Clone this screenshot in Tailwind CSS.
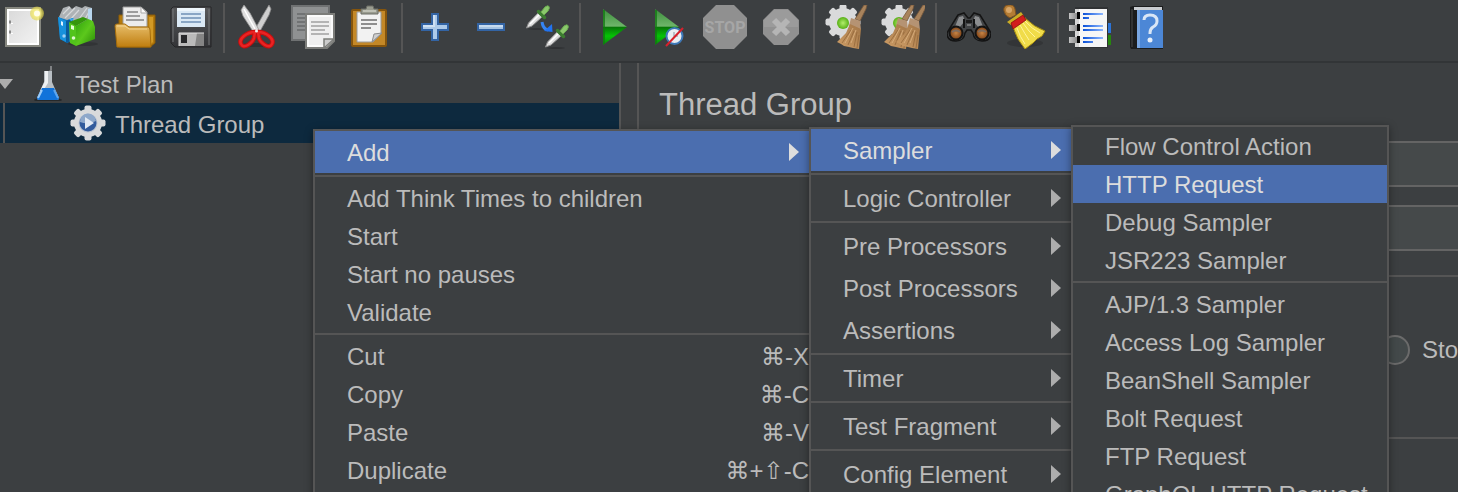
<!DOCTYPE html>
<html lang="en">
<head>
<meta charset="utf-8">
<title>Test Plan</title>
<script src="https://cdn.jsdelivr.net/npm/@tailwindcss/browser@4"></script>
</head>
<body class="relative flex h-screen flex-col overflow-hidden bg-[#3c3f41] font-['Liberation_Sans','DejaVu_Sans',sans-serif] text-2xl text-[#bbbbbb]">

<svg class="absolute h-0 w-0" aria-hidden="true">
  <defs>
    <linearGradient id="paper" x1="0" y1="0" x2="1" y2="1"><stop offset="0" stop-color="#d8d8d8"/><stop offset="1" stop-color="#f4f4f4"/></linearGradient>
    <linearGradient id="gold" x1="0" y1="0" x2="0" y2="1"><stop offset="0" stop-color="#e8bf6c"/><stop offset="1" stop-color="#bf7d0e"/></linearGradient>
    <linearGradient id="green" x1="0" y1="0" x2="1" y2="1"><stop offset="0" stop-color="#2fa30c"/><stop offset=".5" stop-color="#5cc81c"/><stop offset="1" stop-color="#2a8c06"/></linearGradient>
    <linearGradient id="play" x1="0" y1="0" x2="0" y2="1"><stop offset="0" stop-color="#3c8f3c"/><stop offset=".48" stop-color="#6fb56a"/><stop offset=".5" stop-color="#077407"/><stop offset=".75" stop-color="#06c306"/><stop offset="1" stop-color="#0a8a0a"/></linearGradient>
    <linearGradient id="case" x1="0" y1="0" x2="0" y2="1"><stop offset="0" stop-color="#58595b"/><stop offset="1" stop-color="#333437"/></linearGradient>
    <linearGradient id="straw" x1="1" y1="0" x2="0" y2="1"><stop offset="0" stop-color="#a27546"/><stop offset="1" stop-color="#cf9f68"/></linearGradient>
    <linearGradient id="ink" x1="0" y1="0" x2="1" y2="0"><stop offset="0" stop-color="#0a50d8"/><stop offset="1" stop-color="#8fb8ff"/></linearGradient>
    <linearGradient id="metal" x1="0" y1="0" x2="1" y2="0"><stop offset="0" stop-color="#c4c4c4"/><stop offset="1" stop-color="#8e8e8e"/></linearGradient>
    <radialGradient id="star"><stop offset="0" stop-color="#fffef0"/><stop offset=".4" stop-color="#f7f08c"/><stop offset="1" stop-color="#e3d640" stop-opacity=".55"/></radialGradient>
    <radialGradient id="lime"><stop offset="0" stop-color="#b2ee6c"/><stop offset="1" stop-color="#58b016"/></radialGradient>
    <radialGradient id="amber"><stop offset="0" stop-color="#c88444"/><stop offset="1" stop-color="#7a3f14"/></radialGradient>
    <g id="cog" fill="#d9dadb">
      <circle r="14"/>
      <g id="teeth"><rect x="-3.500" y="-17.500" width="7" height="35" rx="2"/><rect x="-17.500" y="-3.500" width="35" height="7" rx="2"/></g>
      <use href="#teeth" transform="rotate(45)"/>
    </g>
    <g id="broom">
      <path d="M39 0h3l-1 4-6 12-5-2z" fill="#a8835c" stroke="#75573a" stroke-width=".8"/>
      <path d="M26 13l9 3 1 9-12-4z" fill="#b59373"/>
      <path d="M25 19l11 5-2 20-6-1-4-1-5-1-3-2-4-2 9-9z" fill="url(#straw)"/>
      <path d="M26 25l-9 13M29 26l-6 14M32 27l-3 15M34 30l-2 13" stroke="#94683b" fill="none" stroke-width=".8"/>
      <path d="M28 23l-8 15M31 25l-5 13" stroke="#ddb483" fill="none" stroke-width=".8"/>
    </g>
    <g id="dropper">
      <ellipse cx="12" cy="24" rx="9" ry=".8" fill="#2c2e30"/>
      <path d="M1.500 23l2-5L13 8l4 4L7 21z" fill="#dedede" stroke="#8e8e8e"/>
      <path d="M5 19L14 10" stroke="#fff" stroke-width="1.500"/>
      <path d="M13.500 6.500l6 6" stroke="#3c7d30" stroke-width="3.500" stroke-linecap="round"/>
      <path d="M16 7l4-5q3-2 4-.500t-1 4.500l-4 4z" fill="#8bc86c" stroke="#6aab50"/>
    </g>
  </defs>
</svg>

<header class="flex shrink-0 gap-2.5 overflow-hidden border-b-2 border-[#323537] pt-[3px] pb-2 pl-px" role="toolbar" aria-label="Main toolbar">
  <div class="flex gap-3 pt-0.5">
    <button class="size-11 shrink-0" aria-label="New"><svg viewBox="0 0 44 44">
      <rect x="5" y="3" width="34" height="38" fill="url(#paper)" stroke="#86877f" stroke-width="2"/><rect x="7" y="5" width="30" height="34" fill="none" stroke="#fff" stroke-width="2"/>
      <path d="M8 15.500h2v3H8zM8 25.500h2v3H8z" fill="#8a8a8a"/><path d="M10 18.500h2M10 28.500h2" stroke="#fff"/>
      <circle cx="36" cy="8.500" r="7" fill="url(#star)"/><circle cx="36" cy="8.500" r="3" fill="#fffde8"/></svg></button>
    <button class="size-11 shrink-0" aria-label="Templates"><svg viewBox="0 0 44 44">
      <ellipse cx="26" cy="39" rx="15" ry="2" fill="#323436"/>
      <path d="M2 12l4-9 6-2 3 3 4-3 6 2 3-2 7 2v14l-15 6L3 16z" fill="#aeb2b5"/><path d="M6 9l7-7M8 13L18 3M12 16L22 5M22 14l8-11M28 14l5-9" stroke="#d6d8da" stroke-width="1.200"/><path d="M31 4l4-1v14l-4 2z" fill="#b8d6ee"/>
      <path d="M1 12l9 3 6-2v22l-6 3-7-4z" fill="#0c78c2"/><path d="M1 12l8 4v21l-6-3z" fill="#1791dc"/><path d="M9 16l7-3v5l-4 3v16l-3 1z" fill="#0b5c9c"/>
      <path d="M12 14l5-1-2 4z" fill="#3aa7ec"/><path d="M4 16l2 1v4l-2-1z" fill="#dff1ff"/><circle cx="7" cy="31" r="1.700" fill="#9fd0f4"/>
      <path d="M12 17l7 3v21l-6-3z" fill="#52c41b"/><path d="M19 21l12-7 5 2 2 6v12l-19 7z" fill="url(#green)"/><path d="M12 17l14-5 5 2-12 7z" fill="#35960c"/>
      <path d="M14 20l3 1v4l-3-1z" fill="#e3ffd3"/><circle cx="16.500" cy="33" r="1.800" fill="#ddf8cd"/></svg></button>
    <button class="size-11 shrink-0" aria-label="Open"><svg viewBox="0 0 44 44">
      <path d="M6 10h8l2 3h17v-3h9v28l-5 4H6z" fill="#b47a0c" stroke="#8a5b06"/><path d="M36 12h4v25l-3 3z" fill="#d39a25"/>
      <path d="M10 2h18l6 5v15H10z" fill="#ececec" stroke="#9b9b9b"/><path d="M28 2v6h6z" fill="#fafafa" stroke="#aaa"/>
      <path d="M14 7h11M13 11h14M13 15h18" stroke="#9d9d9d" stroke-width="1.800"/>
      <path d="M2 21q0-2 2-2h8l4 3h19q2 0 2 3l1 17H4z" fill="url(#gold)" stroke="#a66d0a"/><path d="M4 21h8l4 3h18" fill="none" stroke="#f4d593"/></svg></button>
    <button class="size-11 shrink-0" aria-label="Save"><svg viewBox="0 0 44 44">
      <path d="M4 2h38v40H6l-4-4V4z" fill="url(#case)" stroke="#242526"/><path d="M4 4v33M40 4v36" stroke="#77787a"/>
      <path d="M8 3h28v19H8z" fill="#dbe9f5"/><path d="M8 3h28v3H8z" fill="#edf5fb"/><path d="M12 9h20M12 13h20M12 17h20" stroke="#8aa6c5" stroke-width="1.800"/>
      <path d="M10 28h25v13H10z" fill="#bababa"/><path d="M28 28h7v13h-9z" fill="#858585"/><path d="M12 30h6v8h-6z" fill="#27282a"/><path d="M10 28h25M10 28v13" stroke="#e0e0e0"/></svg></button>
  </div>
  <div class="h-[50px] w-0.5 shrink-0 bg-[#555555]"></div>
  <div class="flex gap-3 pt-0.5">
    <button class="size-11 shrink-0" aria-label="Cut"><svg viewBox="0 0 44 44">
      <ellipse cx="22" cy="40" rx="14" ry="2" fill="#303234"/>
      <path d="M34 0l2 4-2 6-10 18-5-2 9-16z" fill="#cfcfcf" stroke="#8c8c8c" stroke-width=".8"/><path d="M9 0L6 5l2 6 11 17 5-3-9-17z" fill="#dedede" stroke="#929292" stroke-width=".8"/><path d="M9 4l11 20" stroke="#fff" stroke-width="1.500"/>
      <path d="M20 27q-6 0-11 4t-3 8 7 1 6-7zM23 27q6 0 11 4t3 8-7 1-6-7z" fill="none" stroke="#c40f0f" stroke-width="4.500" stroke-linejoin="round"/><path d="M20 27q-6 0-11 4t-3 8 7 1 6-7zM23 27q6 0 11 4t3 8-7 1-6-7z" fill="none" stroke="#ea2323" stroke-width="2.500"/><circle cx="21.500" cy="26" r="1.500" fill="#eee"/></svg></button>
    <button class="size-11 shrink-0" aria-label="Copy"><svg viewBox="0 0 44 44">
      <rect x="1" y="1" width="37" height="34" fill="#8f9192" stroke="#6f7172" stroke-width="2"/><path d="M6 9h10M6 13h8M6 17h8M6 21h8M6 25h8" stroke="#717374" stroke-width="2"/>
      <path d="M15 9h28v27l-7 7H15z" fill="#efefef" stroke="#7c7d7a" stroke-width="2"/><path d="M17 11h24v22l-8 8H17z" fill="none" stroke="#fff" stroke-width="1.500"/>
      <path d="M20 17h18M20 21h18M20 25h14M20 29h18" stroke="#b4b4b4" stroke-width="2"/><path d="M33 43v-9h10z" fill="#ccc" stroke="#7c7d7a" stroke-width="1.500"/></svg></button>
    <button class="size-11 shrink-0" aria-label="Paste"><svg viewBox="0 0 44 44">
      <rect x="5" y="5" width="34" height="36" rx="1" fill="#c48827" stroke="#86550c" stroke-width="2"/>
      <path d="M10 7h24v22l-8 8H10z" fill="#f2f2f2" stroke="#9a9a9a"/><path d="M14 15h16M14 19h16M14 23h10" stroke="#8f8f8f" stroke-width="1.800"/>
      <path d="M25 37l2-8 8-1z" fill="#cfcfcf" stroke="#8c8c8c"/><path d="M14 9V4h5l1-3h6l1 3h4v5z" fill="#9a9c90" stroke="#6b6d65"/><path d="M16 6h13" stroke="#bfc1b6" stroke-width="2"/></svg></button>
  </div>
  <div class="h-[50px] w-0.5 shrink-0 bg-[#555555]"></div>
  <div class="flex gap-3 pt-0.5">
    <button class="size-11 shrink-0" aria-label="Expand all"><svg viewBox="0 0 44 44">
      <path d="M19 9h6v10h10v6H25v10h-6V25H9v-6h10z" fill="#adcae9" stroke="#3364a4" stroke-width="2"/><path d="M21 10v11h-11" fill="none" stroke="#cfe0f2" stroke-width="2"/></svg></button>
    <button class="size-11 shrink-0" aria-label="Collapse all"><svg viewBox="0 0 44 44">
      <path d="M9 19h26v6H9z" fill="#a6c4e4" stroke="#3364a4" stroke-width="2"/><path d="M10 21h24" stroke="#c6daef" stroke-width="2"/></svg></button>
    <button class="size-11 shrink-0" aria-label="Toggle"><svg viewBox="0 0 44 44">
      <use href="#dropper"/><use href="#dropper" x="19" y="19"/>
      <path d="M17 17q1 7 6 8" fill="none" stroke="#3584f2" stroke-width="3"/><path d="M19 26l8-7 .5 8z" fill="#2173f0"/></svg></button>
  </div>
  <div class="h-[50px] w-0.5 shrink-0 bg-[#555555]"></div>
  <div class="flex gap-3 pt-0.5">
    <button class="size-11 shrink-0" aria-label="Start"><svg viewBox="0 0 44 44">
      <path d="M12 4l24 18-24 18z" fill="url(#play)"/><path d="M13 5v34" stroke="#127912" stroke-width="1.500"/></svg></button>
    <button class="size-11 shrink-0" aria-label="Start no pauses"><svg viewBox="0 0 44 44">
      <path d="M8 4l24 18L8 40z" fill="url(#play)"/><path d="M9 5v34" stroke="#127912" stroke-width="1.500"/>
      <circle cx="27.500" cy="31" r="8" fill="#e9edf2" stroke="#3d78b8" stroke-width="2"/><path d="M27 27v4h4" fill="none" stroke="#a9b3bd" stroke-width="1.500"/>
      <path d="M19 41l17-18" stroke="#d8202c" stroke-width="2"/></svg></button>
    <button class="size-11 shrink-0" aria-label="Stop"><svg viewBox="0 0 44 44">
      <path d="M13 0h18l13 13v18L31 44H13L0 31V13z" fill="#909090"/><text x="22" y="28" text-anchor="middle" class="font-[Roboto] text-[16px] font-bold" fill="#a6a6a6">STOP</text></svg></button>
    <button class="size-11 shrink-0" aria-label="Shutdown"><svg viewBox="0 0 44 44">
      <path d="M15 4h14l11 11v14L29 40H15L4 29V15z" fill="#919191"/><path d="M15 5h14l10 10v7H5v-7z" fill="#9b9b9b"/><path d="M15 15l14 14M29 15L15 29" stroke="#b5b5b5" stroke-width="6"/></svg></button>
  </div>
  <div class="h-[50px] w-0.5 shrink-0 bg-[#555555]"></div>
  <div class="flex gap-3 pt-0.5">
    <button class="size-11 shrink-0" aria-label="Clear"><svg viewBox="0 0 44 44">
      <use href="#cog" x="18" y="17"/><circle cx="18" cy="18" r="6" fill="url(#lime)"/><use href="#broom"/></svg></button>
    <button class="size-11 shrink-0" aria-label="Clear all"><svg viewBox="0 0 44 44">
      <use href="#cog" x="18" y="17"/><circle cx="18" cy="18" r="6" fill="url(#lime)"/><use href="#broom" x="-9"/><use href="#broom" x="3"/></svg></button>
  </div>
  <div class="h-[50px] w-0.5 shrink-0 bg-[#555555]"></div>
  <div class="flex gap-3 pt-0.5">
    <button class="size-11 shrink-0" aria-label="Search"><svg viewBox="0 0 44 44">
      <path d="M11 10l6-2 4 5h2l4-5 6 2 8 13 3 5q0 8-9 8-8 0-9-8l-2-3h-4l-2 3q-1 8-9 8-9 0-9-8l3-5z" fill="#424446" stroke="#141414" stroke-width="1.500"/>
      <path d="M12 12l4-1 2 5-7 8H7zM32 12l-4-1-2 5 7 8h4z" fill="#8b8d8f"/><path d="M17 14v9M27 14v9" stroke="#131313" stroke-width="2"/><path d="M19 15h6v3h-6z" fill="#1b1b1b"/><path d="M20 20h4" stroke="#aaa"/>
      <circle cx="9" cy="28" r="6.500" fill="url(#amber)" stroke="#141414" stroke-width="2"/><circle cx="35" cy="28" r="6.500" fill="url(#amber)" stroke="#141414" stroke-width="2"/><path d="M5 27q4-3 8 0M31 27q4-3 8 0" stroke="#7e6d60" fill="none" stroke-width="2"/></svg></button>
    <button class="size-11 shrink-0" aria-label="Reset search"><svg viewBox="0 0 44 44">
      <ellipse cx="22" cy="38" rx="18" ry="4" fill="#333537"/>
      <path d="M8 20q-1-3 2-5l8-5 5 3-10 9z" fill="#b5961d"/><path d="M4 17l14-10 3 4-13 9z" fill="#ccae25"/>
      <path d="M1 6q-1-5 4-6 6-1 7 4l1 6-6 3q-5-2-6-7z" fill="#b47c34" stroke="#7d5220"/><circle cx="6" cy="5" r="3" fill="#d7a668"/>
      <path d="M10 22l12-9q9 9 20 13l-3 5-5 3-4 4-8 6q-8-9-12-22z" fill="#f0dc49" stroke="#a88e10"/>
      <path d="M14 23q3 9 8 16M17 20q5 9 9 15M20 18q6 9 12 14M22 16q7 8 15 12" fill="none" stroke="#fff49b"/>
      <path d="M8 18l12-8 3 5-13 9z" fill="#d21d1d" stroke="#8d0e0e" stroke-width=".8"/></svg></button>
  </div>
  <div class="h-[50px] w-0.5 shrink-0 bg-[#555555]"></div>
  <div class="flex gap-3 pt-0.5">
    <button class="size-11 shrink-0" aria-label="Function helper"><svg viewBox="0 0 44 44">
      <path d="M37 18h5v10h-5z" fill="#2c74d8"/><path d="M37 30h5v10h-5z" fill="#27870e"/>
      <path d="M6 2h33v41H6z" fill="#303234"/><path d="M6 4h32v38H6z" fill="#f6f6f6"/><path d="M6 4h4v38H6z" fill="#d5d5d5"/>
      <path d="M0 8h8v6H0zM0 20h8v6H0zM0 32h8v6H0z" fill="url(#metal)"/><path d="M8 7h3v7H8zM8 19h3v7H8zM8 31h3v7H8z" fill="#050505"/>
      <path d="M14 8h20v2H14zM14 12h6v2h-6zM14 20h20v2H14zM14 24h20v2H14zM14 32h20v2H14zM14 36h10v2H14z" fill="url(#ink)"/></svg></button>
    <button class="size-11 shrink-0" aria-label="Help"><svg viewBox="0 0 44 44">
      <path d="M5 2l3-1h30v43H6l-1-2z" fill="#1b1c1d"/><path d="M9 2h28v3H9z" fill="#c9cdd1"/><path d="M12 5h26v38H12z" fill="#4c87d6"/><path d="M12 5h3v38h-3z" fill="#79a6e2"/><path d="M7 4v38" stroke="#4a4b4c"/>
      <path d="M19 15q0-5 6-5 7 0 7 6 0 4-4 6-3 2-3 6v1" fill="none" stroke="#d9e6f6" stroke-width="3"/><circle cx="25" cy="35" r="2.500" fill="#e6effa"/></svg></button>
  </div>
</header>

<main class="flex min-h-0 flex-1">
  <nav class="w-[621px] shrink-0 border-r-2 border-[#555555]" aria-label="Test plan tree">
    <div class="flex h-10 items-center">
      <svg class="h-3 w-[13px]" viewBox="3 0 13 12"><path d="M0 2h16L8 12z" fill="#adadad"/></svg>
      <svg class="ml-[17px] size-9" viewBox="0 0 36 36">
        <ellipse cx="18" cy="35" rx="14" ry="2" fill="#25282a"/><path d="M21 1v4l-2 3" stroke="#808284" stroke-width="2" fill="none"/>
        <path d="M14 6h8v11l7 16q0 2-2 2H9q-2 0-2-2l7-16z" fill="#b9bfc4"/><path d="M15 6h3v12l-5 8h-3l5-10z" fill="#eef1f3"/>
        <path d="M12 23h12l5 10q0 2-2 2H9q-2 0-2-2z" fill="#1173da"/><path d="M12 25l-4 8" stroke="#9cccf8" stroke-width="2"/><path d="M24 25l4 8" stroke="#5ea6ee" stroke-width="2"/></svg>
      <span class="ml-[9px] pt-1">Test Plan</span>
    </div>
    <div class="flex h-10 items-center bg-[#0d293e] pl-[3px]">
      <span class="h-full w-0.5 bg-[#555555]"></span>
      <svg class="ml-[65px] size-9" viewBox="0 0 36 36">
        <use href="#cog" x="18" y="18"/><circle cx="18" cy="18" r="9.500" fill="#b9c3d2"/><circle cx="18" cy="18" r="8.500" fill="#325b9c"/><path d="M10 17a8 8 0 0 1 16-1q-8 4-16 1z" fill="#8ea8ca"/><path d="M15 12l9 6-9 6z" fill="#e3eaf3"/></svg>
      <span class="ml-[9px] pt-1">Thread Group</span>
    </div>
  </nav>
  <section class="ml-4 min-w-0 flex-1 overflow-hidden border-l-2 border-[#555555] pl-5">
    <h1 class="mt-[22px] text-[31px] leading-10">Thread Group</h1>
    <div class="mt-4 flex flex-col gap-[18px]">
      <input class="h-[46px] w-full border-y-2 border-[#646464] bg-[#45494a]" aria-label="Name">
      <input class="h-[46px] w-full border-y-2 border-[#646464] bg-[#45494a]" aria-label="Comments">
    </div>
    <div class="mt-6 flex h-[164px] items-center justify-end border-y-2 border-[#555555]">
      <label class="flex items-center gap-3 pb-3.5 whitespace-nowrap"><input type="radio" class="size-[30px] appearance-none rounded-full border-2 border-[#6b6b6b] bg-[#43494a]">Sto</label>
    </div>
  </section>
</main>

<div role="menu" aria-label="Thread Group actions" class="absolute top-[129px] left-[313px] flex w-[498px] flex-col border-2 border-[#555555] bg-[#3c3f41] pb-4 shadow-[0_2px_8px_rgba(0,0,0,0.4)]">
  <button role="menuitem" class="flex h-[42px] shrink-0 items-center justify-between bg-[#4b6eaf] pt-0.5 pr-2.5 pl-8 text-[#dddddd]">Add<svg class="h-5 w-2.5" viewBox="0 0 10 20"><path d="M0 0l10 9L0 18z" fill="currentColor"/></svg></button>
  <div role="separator" class="my-0.5 h-0.5 shrink-0 bg-[#555555]"></div>
  <button role="menuitem" class="flex h-[38px] shrink-0 items-center pt-0.5 pl-8">Add Think Times to children</button>
  <button role="menuitem" class="flex h-[38px] shrink-0 items-center pt-0.5 pl-8">Start</button>
  <button role="menuitem" class="flex h-[38px] shrink-0 items-center pt-0.5 pl-8">Start no pauses</button>
  <button role="menuitem" class="flex h-[38px] shrink-0 items-center pt-0.5 pl-8">Validate</button>
  <div role="separator" class="my-0.5 h-0.5 shrink-0 bg-[#555555]"></div>
  <button role="menuitem" class="flex h-[38px] shrink-0 items-center justify-between pt-0.5 pl-8">Cut<span>⌘-X</span></button>
  <button role="menuitem" class="flex h-[38px] shrink-0 items-center justify-between pt-0.5 pl-8">Copy<span>⌘-C</span></button>
  <button role="menuitem" class="flex h-[38px] shrink-0 items-center justify-between pt-0.5 pl-8">Paste<span>⌘-V</span></button>
  <button role="menuitem" class="flex h-[38px] shrink-0 items-center justify-between pt-0.5 pl-8">Duplicate<span>⌘+⇧-C</span></button>
</div>

<div role="menu" aria-label="Add" class="absolute top-[127px] left-[809px] flex w-[264px] flex-col border-2 border-[#555555] bg-[#3c3f41] shadow-[0_2px_8px_rgba(0,0,0,0.4)]">
  <button role="menuitem" class="flex h-[42px] shrink-0 items-center justify-between bg-[#4b6eaf] pt-0.5 pr-2.5 pl-8 text-[#dddddd]">Sampler<svg class="h-5 w-2.5" viewBox="0 0 10 20"><path d="M0 0l10 9L0 18z" fill="currentColor"/></svg></button>
  <div role="separator" class="my-0.5 h-0.5 shrink-0 bg-[#555555]"></div>
  <button role="menuitem" class="flex h-[42px] shrink-0 items-center justify-between pt-0.5 pr-2.5 pl-8">Logic Controller<svg class="h-5 w-2.5" viewBox="0 0 10 20"><path d="M0 0l10 9L0 18z" fill="#adadad"/></svg></button>
  <div role="separator" class="my-0.5 h-0.5 shrink-0 bg-[#555555]"></div>
  <button role="menuitem" class="flex h-[42px] shrink-0 items-center justify-between pt-0.5 pr-2.5 pl-8">Pre Processors<svg class="h-5 w-2.5" viewBox="0 0 10 20"><path d="M0 0l10 9L0 18z" fill="#adadad"/></svg></button>
  <button role="menuitem" class="flex h-[42px] shrink-0 items-center justify-between pt-0.5 pr-2.5 pl-8">Post Processors<svg class="h-5 w-2.5" viewBox="0 0 10 20"><path d="M0 0l10 9L0 18z" fill="#adadad"/></svg></button>
  <button role="menuitem" class="flex h-[42px] shrink-0 items-center justify-between pt-0.5 pr-2.5 pl-8">Assertions<svg class="h-5 w-2.5" viewBox="0 0 10 20"><path d="M0 0l10 9L0 18z" fill="#adadad"/></svg></button>
  <div role="separator" class="my-0.5 h-0.5 shrink-0 bg-[#555555]"></div>
  <button role="menuitem" class="flex h-[42px] shrink-0 items-center justify-between pt-0.5 pr-2.5 pl-8">Timer<svg class="h-5 w-2.5" viewBox="0 0 10 20"><path d="M0 0l10 9L0 18z" fill="#adadad"/></svg></button>
  <div role="separator" class="my-0.5 h-0.5 shrink-0 bg-[#555555]"></div>
  <button role="menuitem" class="flex h-[42px] shrink-0 items-center justify-between pt-0.5 pr-2.5 pl-8">Test Fragment<svg class="h-5 w-2.5" viewBox="0 0 10 20"><path d="M0 0l10 9L0 18z" fill="#adadad"/></svg></button>
  <div role="separator" class="my-0.5 h-0.5 shrink-0 bg-[#555555]"></div>
  <button role="menuitem" class="flex h-[42px] shrink-0 items-center justify-between pt-0.5 pr-2.5 pl-8">Config Element<svg class="h-5 w-2.5" viewBox="0 0 10 20"><path d="M0 0l10 9L0 18z" fill="#adadad"/></svg></button>
</div>

<div role="menu" aria-label="Sampler" class="absolute top-[125px] left-[1071px] flex w-[318px] flex-col border-2 border-[#555555] bg-[#3c3f41] shadow-[0_2px_8px_rgba(0,0,0,0.4)]">
  <button role="menuitem" class="flex h-[38px] shrink-0 items-center pt-0.5 pl-8">Flow Control Action</button>
  <button role="menuitem" class="flex h-[38px] shrink-0 items-center bg-[#4b6eaf] pt-0.5 pl-8 text-[#dddddd]">HTTP Request</button>
  <button role="menuitem" class="flex h-[38px] shrink-0 items-center pt-0.5 pl-8">Debug Sampler</button>
  <button role="menuitem" class="flex h-[38px] shrink-0 items-center pt-0.5 pl-8">JSR223 Sampler</button>
  <div role="separator" class="my-0.5 h-0.5 shrink-0 bg-[#555555]"></div>
  <button role="menuitem" class="flex h-[38px] shrink-0 items-center pt-0.5 pl-8">AJP/1.3 Sampler</button>
  <button role="menuitem" class="flex h-[38px] shrink-0 items-center pt-0.5 pl-8">Access Log Sampler</button>
  <button role="menuitem" class="flex h-[38px] shrink-0 items-center pt-0.5 pl-8">BeanShell Sampler</button>
  <button role="menuitem" class="flex h-[38px] shrink-0 items-center pt-0.5 pl-8">Bolt Request</button>
  <button role="menuitem" class="flex h-[38px] shrink-0 items-center pt-0.5 pl-8">FTP Request</button>
  <button role="menuitem" class="flex h-[38px] shrink-0 items-center pt-0.5 pl-8">GraphQL HTTP Request</button>
</div>

</body>
</html>
